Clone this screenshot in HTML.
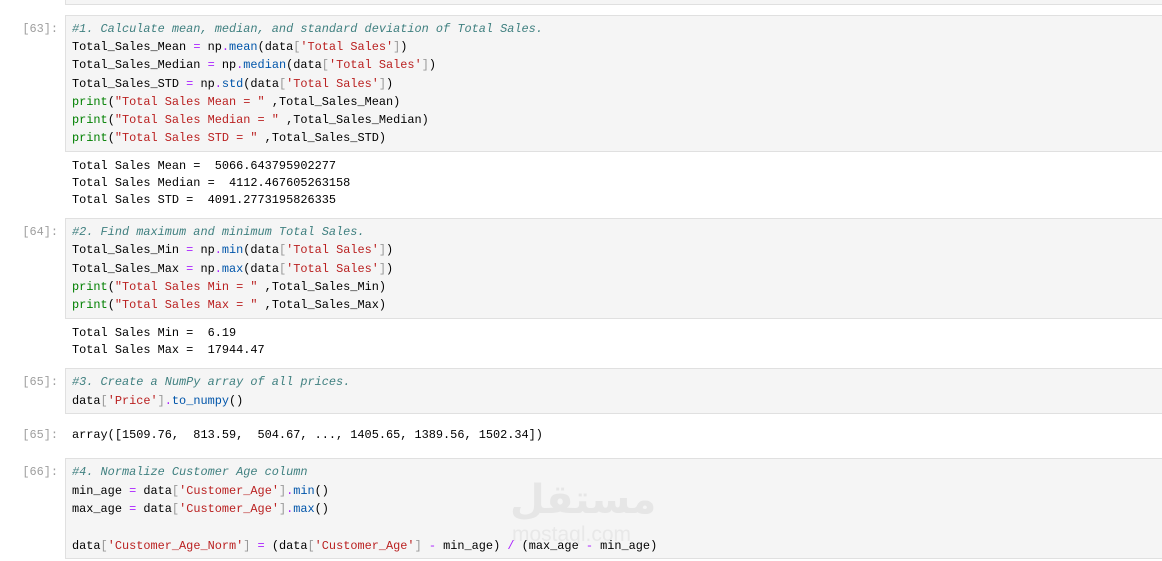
<!DOCTYPE html>
<html><head><meta charset="utf-8"><style>
body{margin:0;width:1162px;height:561px;background:#fff;position:relative;overflow:hidden;font-family:"Liberation Mono",monospace;font-size:11.9px;color:#000}
.box{position:absolute;left:65px;right:-2px;background:#f5f5f5;border:1px solid #e0e0e0}
.l{position:absolute;left:72px;height:18px;line-height:18px;white-space:pre}
.p{position:absolute;left:0;width:58px;text-align:right;height:18px;line-height:18px;color:#9e9e9e;white-space:pre}
.c{color:#408080;font-style:italic}.s{color:#ba2121}.k{color:#008000}.o{color:#aa22ff}.n{color:#0055aa}.b{color:#999}
</style></head><body>
<div class="box" style="top:-5px;height:8px"></div>

<div class="box" style="top:15px;height:135px"></div>
<div class="p" style="top:20px">[63]:</div>
<div class="l" style="top:20px"><span class="c">#1. Calculate mean, median, and standard deviation of Total Sales.</span></div>
<div class="l" style="top:38px">Total_Sales_Mean <span class="o">=</span> np<span class="o">.</span><span class="n">mean</span>(data<span class="b">[</span><span class="s">'Total Sales'</span><span class="b">]</span>)</div>
<div class="l" style="top:56px">Total_Sales_Median <span class="o">=</span> np<span class="o">.</span><span class="n">median</span>(data<span class="b">[</span><span class="s">'Total Sales'</span><span class="b">]</span>)</div>
<div class="l" style="top:75px">Total_Sales_STD <span class="o">=</span> np<span class="o">.</span><span class="n">std</span>(data<span class="b">[</span><span class="s">'Total Sales'</span><span class="b">]</span>)</div>
<div class="l" style="top:93px"><span class="k">print</span>(<span class="s">"Total Sales Mean = "</span> ,Total_Sales_Mean)</div>
<div class="l" style="top:111px"><span class="k">print</span>(<span class="s">"Total Sales Median = "</span> ,Total_Sales_Median)</div>
<div class="l" style="top:129px"><span class="k">print</span>(<span class="s">"Total Sales STD = "</span> ,Total_Sales_STD)</div>
<div class="l" style="top:157px">Total Sales Mean =  5066.643795902277</div>
<div class="l" style="top:174px">Total Sales Median =  4112.467605263158</div>
<div class="l" style="top:191px">Total Sales STD =  4091.2773195826335</div>

<div class="box" style="top:218px;height:99px"></div>
<div class="p" style="top:223px">[64]:</div>
<div class="l" style="top:223px"><span class="c">#2. Find maximum and minimum Total Sales.</span></div>
<div class="l" style="top:241px">Total_Sales_Min <span class="o">=</span> np<span class="o">.</span><span class="n">min</span>(data<span class="b">[</span><span class="s">'Total Sales'</span><span class="b">]</span>)</div>
<div class="l" style="top:260px">Total_Sales_Max <span class="o">=</span> np<span class="o">.</span><span class="n">max</span>(data<span class="b">[</span><span class="s">'Total Sales'</span><span class="b">]</span>)</div>
<div class="l" style="top:278px"><span class="k">print</span>(<span class="s">"Total Sales Min = "</span> ,Total_Sales_Min)</div>
<div class="l" style="top:296px"><span class="k">print</span>(<span class="s">"Total Sales Max = "</span> ,Total_Sales_Max)</div>
<div class="l" style="top:324px">Total Sales Min =  6.19</div>
<div class="l" style="top:341px">Total Sales Max =  17944.47</div>

<div class="box" style="top:368px;height:44px"></div>
<div class="p" style="top:373px">[65]:</div>
<div class="l" style="top:373px"><span class="c">#3. Create a NumPy array of all prices.</span></div>
<div class="l" style="top:392px">data<span class="b">[</span><span class="s">'Price'</span><span class="b">]</span><span class="o">.</span><span class="n">to_numpy</span>()</div>
<div class="p" style="top:426px">[65]:</div>
<div class="l" style="top:426px">array([1509.76,  813.59,  504.67, ..., 1405.65, 1389.56, 1502.34])</div>

<div class="box" style="top:458px;height:99px"></div>
<div style="position:absolute;left:510px;top:478px;font-family:'DejaVu Sans',sans-serif;font-size:40px;font-weight:bold;color:#e6e6e6;line-height:44px">مستقل</div>
<div style="position:absolute;left:512px;top:524px;font-family:'Liberation Sans',sans-serif;font-size:21px;color:#e8e8e8;line-height:22px">mostaql.com</div>
<div class="p" style="top:463px">[66]:</div>
<div class="l" style="top:463px"><span class="c">#4. Normalize Customer Age column</span></div>
<div class="l" style="top:482px">min_age <span class="o">=</span> data<span class="b">[</span><span class="s">'Customer_Age'</span><span class="b">]</span><span class="o">.</span><span class="n">min</span>()</div>
<div class="l" style="top:500px">max_age <span class="o">=</span> data<span class="b">[</span><span class="s">'Customer_Age'</span><span class="b">]</span><span class="o">.</span><span class="n">max</span>()</div>
<div class="l" style="top:537px">data<span class="b">[</span><span class="s">'Customer_Age_Norm'</span><span class="b">]</span> <span class="o">=</span> (data<span class="b">[</span><span class="s">'Customer_Age'</span><span class="b">]</span> <span class="o">-</span> min_age) <span class="o">/</span> (max_age <span class="o">-</span> min_age)</div>
</body></html>
